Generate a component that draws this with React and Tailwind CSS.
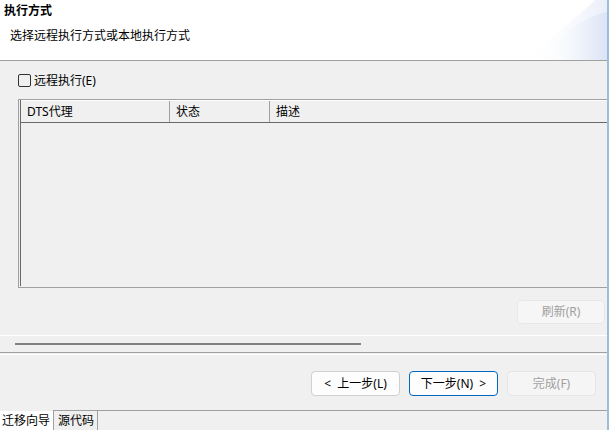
import React from 'react'

const HeaderArt = () => (
  <svg className="absolute right-0 top-0" width="90" height="60" viewBox="0 0 90 60">
    <defs>
      <linearGradient id="fadeA" x1="0" y1="0" x2="1" y2="0">
        <stop offset="0" stopColor="#ffffff" stopOpacity="0" />
        <stop offset="1" stopColor="#e9eef9" />
      </linearGradient>
      <linearGradient id="fadeB" x1="0" y1="0" x2="1" y2="0">
        <stop offset="0" stopColor="#ffffff" stopOpacity="0" />
        <stop offset="1" stopColor="#dbe4f5" />
      </linearGradient>
    </defs>
    <path d="M8 60 C 30 40, 60 18, 78 0 L 90 0 L 90 60 Z" fill="url(#fadeA)" />
    <path d="M28 60 C 40 38, 62 18, 90 12 L 90 60 Z" fill="url(#fadeB)" />
  </svg>
)

const Button = ({ children, variant = 'normal' }) => {
  const styles = {
    normal: 'bg-[#fdfdfd] border-[#d0d0d0] text-black',
    primary: 'bg-[#fdfdfd] border-[#0067c0] text-black',
    disabled: 'bg-[#f5f5f5] border-[#e5e5e5] text-[#a0a0a0]',
  }
  return (
    <div
      className={`w-[89px] h-[25px] flex items-center justify-center rounded-[4px] border text-[12px] leading-none ${styles[variant]}`}
    >
      {children}
    </div>
  )
}

const App = () => {
  return (
    <div className="w-[609px] h-[430px] flex bg-[#f0f0f0] overflow-hidden font-['Noto_Sans','Noto_Sans_CJK_SC',sans-serif] text-[12px] text-black">
      <div className="w-[607px] flex flex-col">
        {/* Page header */}
        <div className="relative h-[61px] bg-white border-b border-[#a0a0a0]">
          <HeaderArt />
          <div className="relative pl-[4px] pt-[3px] font-bold leading-[15px]">执行方式</div>
          <div className="relative pl-[10px] pt-[10px] leading-[15px]">选择远程执行方式或本地执行方式</div>
        </div>

        {/* Remote execution option */}
        <div className="flex items-center pl-[18px] pt-[13px] h-[26px]">
          <div className="w-[13px] h-[13px] border border-[#333333] rounded-[2px]" />
          <span className="ml-[3px] leading-[13px]">远程执行(E)</span>
        </div>

        {/* Agent table */}
        <div className="ml-[18px] mt-[12px] h-[189px] border-t border-l border-b border-[#a0a0a0] flex">
          <div className="ml-px mb-px flex-1 border-l border-[#696969] flex flex-col">
            <div className="h-[23px] flex border-t border-white border-b border-b-[#696969]">
              <div className="w-[149px] pl-[6px] flex items-center border-r border-[#a0a0a0]">DTS代理</div>
              <div className="w-[100px] pl-[6px] flex items-center border-r border-[#a0a0a0]">状态</div>
              <div className="flex-1 pl-[6px] flex items-center">描述</div>
            </div>
            <div className="flex-1" />
          </div>
        </div>

        <div className="flex justify-end pr-[2px] mt-[12px]">
          <div className="w-[88px] h-[24px] flex items-center justify-center rounded-[4px] border border-[#e8e8e8] bg-[#f6f6f6] text-[#a0a0a0] leading-none">
            刷新(R)
          </div>
        </div>

        {/* Separators and progress line */}
        <div className="mt-[11px] h-px bg-white" />
        <div className="mt-[7px] ml-[15px] w-[346px] h-[2px] bg-[#808080]" />
        <div className="mt-[7px] h-px bg-[#a0a0a0]" />
        <div className="h-px bg-[#f0f0f0]" />
        <div className="h-px bg-white" />

        {/* Wizard buttons */}
        <div className="flex justify-end gap-[9px] pr-[11px] mt-[16px]">
          <Button>&lt;&nbsp;&nbsp;上一步(L)</Button>
          <Button variant="primary">下一步(N)&nbsp;&nbsp;&gt;</Button>
          <Button variant="disabled">完成(F)</Button>
        </div>

        {/* Bottom tabs */}
        <div className="mt-auto flex h-[20px]">
          <div className="w-[53px] bg-white flex items-center pl-[2px] mt-px">迁移向导</div>
          <div className="w-[45px] border-t border-l border-r border-[#a0a0a0] flex items-center pl-[4px]">源代码</div>
          <div className="flex-1 border-t border-[#a0a0a0]" />
        </div>
      </div>
      <div className="w-[2px] bg-[#9dbbdb]" />
    </div>
  )
}

export default App
